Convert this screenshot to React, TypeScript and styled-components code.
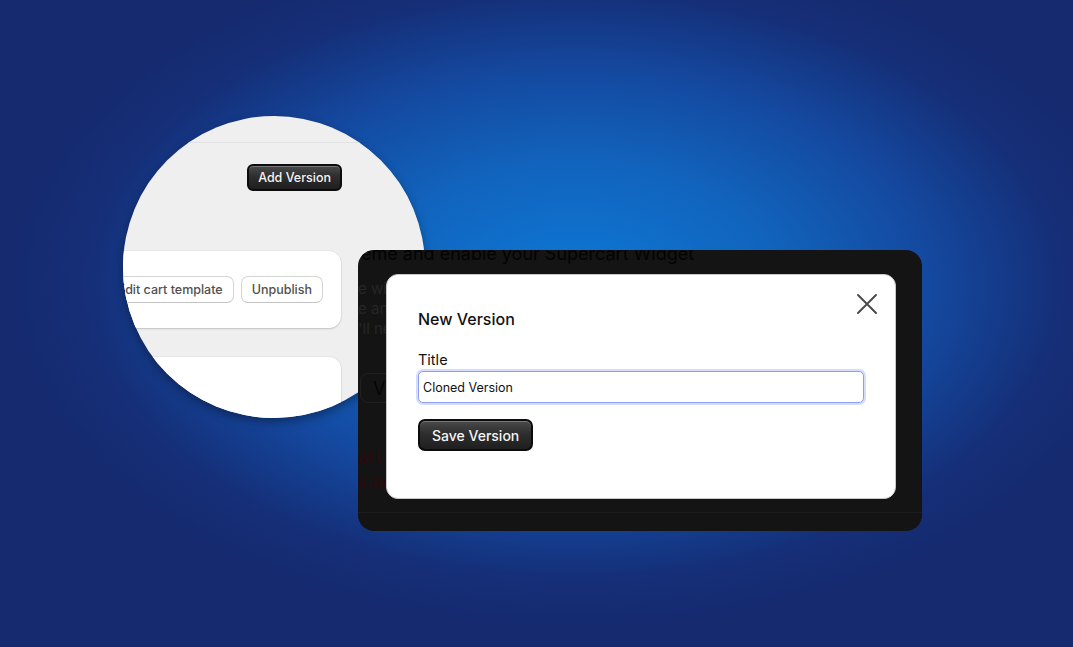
import React from "react";
import styled, { createGlobalStyle } from "styled-components";

const Global = createGlobalStyle`
  html, body { margin: 0; padding: 0; }
  body { font-family: Inter, "Noto Sans", "Liberation Sans", sans-serif; }
  * { box-sizing: border-box; }
`;

const Canvas = styled.div`
  position: relative;
  width: 1073px;
  height: 647px;
  overflow: hidden;
  background: radial-gradient(
    ellipse 570px 345px at 575px 285px,
    #0d78d7 0%,
    #1164bd 35%,
    #1449a0 62%,
    #152f78 85%,
    #152a6f 100%
  );
`;

/* ---------- magnifier lens ---------- */
const Lens = styled.div`
  position: absolute;
  left: 123px;
  top: 116px;
  width: 302px;
  height: 302px;
  border-radius: 50%;
  overflow: hidden;
  background: #efefef;
  box-shadow: 0 4px 10px rgba(0, 0, 0, 0.35);
  display: flex;
  flex-direction: column;
  align-items: flex-end;
`;

const LensHeader = styled.div`
  align-self: stretch;
  height: 27px;
  border-bottom: 1px solid #e2e2e2;
  flex-shrink: 0;
`;

const LensToolbar = styled.div`
  padding: 21px 83px 0 0;
  height: 108px;
  flex-shrink: 0;
`;

const DarkButton = styled.button<{ $size: "sm" | "md" }>`
  font-family: Inter, "Noto Sans", sans-serif;
  font-size: ${(p) => (p.$size === "sm" ? "12.5px" : "14px")};
  font-weight: 500;
  color: #f4f4f4;
  height: ${(p) => (p.$size === "sm" ? "27px" : "32px")};
  padding: ${(p) => (p.$size === "sm" ? "0 9px" : "0 12px")};
  border: 2px solid #0c0c0c;
  border-radius: ${(p) => (p.$size === "sm" ? "6px" : "7px")};
  background: linear-gradient(#4a4a4a 0%, #2e2e2e 45%, #1f1f1f 100%);
  box-shadow: inset 0 1px 0 rgba(255, 255, 255, 0.25);
  display: inline-flex;
  align-items: center;
  white-space: nowrap;
`;

const LensCard = styled.div<{ $height: number }>`
  width: 420px;
  height: ${(p) => p.$height}px;
  margin-right: 84px;
  background: #ffffff;
  border-radius: 12px;
  box-shadow: 0 1px 2px rgba(0, 0, 0, 0.16), 0 0 0 1px rgba(0, 0, 0, 0.03);
  flex-shrink: 0;
  display: flex;
  justify-content: flex-end;
  align-items: center;
  gap: 7px;
  padding-right: 18px;
`;

const LensGap = styled.div`
  height: 29px;
  flex-shrink: 0;
`;

const OutlineButton = styled.button`
  font-family: Inter, "Noto Sans", sans-serif;
  font-size: 12.5px;
  font-weight: 500;
  color: #505050;
  height: 27px;
  padding: 0 10px;
  background: #ffffff;
  border: 1.5px solid #d4d4d4;
  border-bottom-color: #c4c4c4;
  border-radius: 7px;
  white-space: nowrap;
`;

/* ---------- dimmed page with modal ---------- */
const DimPanel = styled.div`
  position: absolute;
  left: 358px;
  top: 250px;
  width: 564px;
  height: 281px;
  border-radius: 16px;
  background: #141414;
  overflow: hidden;
  display: flex;
  flex-direction: column;
`;

const UnderHeading = styled.div`
  font-size: 18px;
  line-height: 22px;
  color: #030303;
  margin: -7px 0 0 3px;
  white-space: nowrap;
`;

const UnderLines = styled.div`
  margin: 14px 0 0 0;
  display: flex;
  flex-direction: column;
  font-size: 15px;
  line-height: 20px;
  color: #262626;
  white-space: nowrap;
`;

const UnderButton = styled.div`
  margin: 34px 0 0 2px;
  width: 120px;
  height: 30px;
  border: 1px solid #202020;
  border-radius: 8px;
  font-size: 18px;
  color: #050505;
  display: flex;
  align-items: center;
  padding-left: 12px;
  white-space: nowrap;
`;

const UnderRed = styled.div`
  margin: 42px 0 0 0;
  display: flex;
  flex-direction: column;
  font-size: 18px;
  line-height: 24px;
  color: #2a0b0b;
  white-space: nowrap;
`;

const UnderRule = styled.div`
  margin-top: 19px;
  border-top: 1px solid #1d1d1d;
`;

const Modal = styled.div`
  position: absolute;
  left: 28px;
  top: 24px;
  width: 510px;
  height: 225px;
  background: #ffffff;
  border: 1px solid #c9c9c9;
  border-radius: 12px;
  padding: 32px 32px 0 31px;
  display: flex;
  flex-direction: column;
  align-items: flex-start;
`;

const ModalTitle = styled.h2`
  margin: 0;
  font-size: 16px;
  line-height: 24px;
  font-weight: 500;
  color: #111111;
`;

const CloseButton = styled.button`
  position: absolute;
  right: 17px;
  top: 18px;
  width: 22px;
  height: 22px;
  padding: 0;
  border: none;
  background: transparent;
  display: flex;
  align-items: center;
  justify-content: center;
`;

const FieldLabel = styled.label`
  margin-top: 19px;
  font-size: 14.5px;
  line-height: 20px;
  color: #111111;
`;

const TextInput = styled.input`
  margin-top: 1px;
  width: 446px;
  height: 32px;
  padding: 0 4px;
  font-family: Inter, "Noto Sans", sans-serif;
  font-size: 12.5px;
  color: #111111;
  border: 1px solid #8d9ef4;
  border-radius: 5px;
  box-shadow: 0 0 0 2px #d6dcfc;
  outline: none;
`;

const SaveRow = styled.div`
  margin-top: 16px;
`;

export default function App() {
  return (
    <Canvas>
      <Global />
      <Lens>
        <LensHeader />
        <LensToolbar>
          <DarkButton $size="sm">Add Version</DarkButton>
        </LensToolbar>
        <LensCard $height={77}>
          <OutlineButton>Edit cart template</OutlineButton>
          <OutlineButton>Unpublish</OutlineButton>
        </LensCard>
        <LensGap />
        <LensCard $height={120} />
      </Lens>

      <DimPanel>
        <UnderHeading>eme and enable your Supercart Widget</UnderHeading>
        <UnderLines>
          <span>e will automatically add the widget to your theme</span>
          <span>e and make sure it is visible on your store</span>
          <span>'ll need to enable the app embed first</span>
        </UnderLines>
        <UnderButton>View theme</UnderButton>
        <UnderRed>
          <span>art widget is not enabled</span>
          <span>s and enable it in the theme editor</span>
        </UnderRed>
        <UnderRule />

        <Modal>
          <ModalTitle>New Version</ModalTitle>
          <CloseButton aria-label="Close">
            <svg width="22" height="22" viewBox="0 0 22 22">
              <path
                d="M2 2 L20 20 M20 2 L2 20"
                stroke="#4a4a4a"
                strokeWidth="2"
                strokeLinecap="round"
              />
            </svg>
          </CloseButton>
          <FieldLabel htmlFor="title">Title</FieldLabel>
          <TextInput id="title" defaultValue="Cloned Version" />
          <SaveRow>
            <DarkButton $size="md">Save Version</DarkButton>
          </SaveRow>
        </Modal>
      </DimPanel>
    </Canvas>
  );
}
